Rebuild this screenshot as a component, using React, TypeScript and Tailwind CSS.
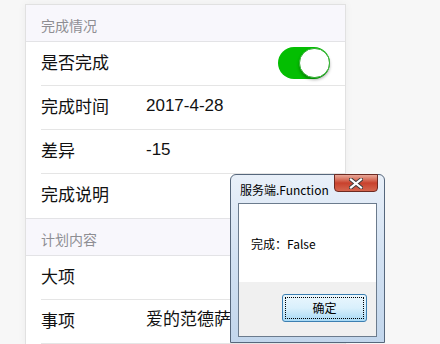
import React from "react";

const cn = '"Noto Sans CJK SC", "Liberation Sans", sans-serif';
const latinCn = '"Liberation Sans", "Noto Sans CJK SC", sans-serif';

type Row = { label: string; value?: string; toggle?: boolean };

const SectionHeader: React.FC<{ title: string }> = ({ title }) => (
  <div className="h-[37px] border-b border-[#e3e3e6] bg-[#f8f7fc] pl-[15px] pt-[10px] text-[14px] leading-[20px] text-[#8e8e93]">
    {title}
  </div>
);

const Toggle: React.FC = () => (
  <div className="relative mt-[3px] h-[32px] w-[52px] rounded-full bg-[#04be02]">
    <div className="absolute right-0 top-[1px] h-[30px] w-[31px] rounded-full border border-[#33b033] bg-white shadow-[0_2px_3px_rgba(0,0,0,0.3)]" />
  </div>
);

const ListRow: React.FC<{ row: Row; last?: boolean }> = ({ row, last }) => (
  <div className="pl-[15px]">
    <div
      className={
        "flex h-[44px] items-center pb-[4px] pr-[15px] text-[17px] text-[#111] " +
        (last ? "" : "border-b border-[#e5e5e5]")
      }
    >
      <div className="w-[105px] shrink-0">{row.label}</div>
      <div className="flex-1 whitespace-nowrap" style={{ fontFamily: latinCn }}>
        {row.value}
      </div>
      {row.toggle && <Toggle />}
    </div>
  </div>
);

const WinDialog: React.FC = () => (
  <div
    className="absolute left-[230px] top-[174px] h-[169px] w-[155px] rounded-t-[6px] border border-[#56677c] bg-gradient-to-b from-[#e9f0f9] via-[#d2e1f2] to-[#c2d6ec] px-[7px] pb-[6px]"
    style={{ fontFamily: cn }}
  >
    <div className="relative flex h-[28px] items-center pl-[2px] text-[12px] text-black">
      <span className="pt-[2px]">服务端.Function</span>
      <div className="absolute right-[-1px] top-[-1px] flex h-[18px] w-[44px] items-center justify-center rounded-b-[4px] border border-[#6d2a22] bg-gradient-to-b from-[#e8a899] via-[#c8412d] to-[#d4654e]">
        <svg width="14" height="11" viewBox="0 0 14 11">
          <path d="M2 1.5 L12 9.5 M12 1.5 L2 9.5" stroke="#3a3a3a" strokeWidth="4" strokeLinecap="square" />
          <path d="M2 1.5 L12 9.5 M12 1.5 L2 9.5" stroke="#fff" strokeWidth="2.2" strokeLinecap="square" />
        </svg>
      </div>
    </div>
    <div className="flex h-[134px] flex-col border border-[#6b7b8d]">
      <div className="flex h-[78px] items-center bg-white pl-[12px] pt-[2px] text-[12px] text-black">
        完成：False
      </div>
      <div className="flex flex-1 items-start justify-end bg-[#f0f0f0] pr-[9px] pt-[12px]">
        <div className="h-[28px] w-[85px] rounded-[3px] border border-[#3c7fb1] bg-gradient-to-b from-[#eaf6fd] via-[#d9f0fc] to-[#a7d9f5] p-[2px]">
          <div className="flex h-full w-full items-center justify-center border border-dotted border-black text-[12px] text-black">
            确定
          </div>
        </div>
      </div>
    </div>
  </div>
);

export default function App() {
  const section1: Row[] = [
    { label: "是否完成", toggle: true },
    { label: "完成时间", value: "2017-4-28" },
    { label: "差异", value: "-15" },
    { label: "完成说明" },
  ];
  const section2: Row[] = [
    { label: "大项" },
    { label: "事项", value: "爱的范德萨" },
  ];

  return (
    <div
      className="relative h-[344px] w-[440px] overflow-hidden bg-[#f7f7f7] pl-[25px] pt-[4px]"
      style={{ fontFamily: cn }}
    >
      <div className="w-[321px] border border-b-0 border-[#e1e1e1] bg-white shadow-[0_0_8px_rgba(0,0,0,0.05)]">
        <SectionHeader title="完成情况" />
        {section1.map((r, i) => (
          <ListRow key={r.label} row={r} last={i === section1.length - 1} />
        ))}
        <div className="border-t border-[#e3e3e6]">
          <SectionHeader title="计划内容" />
        </div>
        {section2.map((r) => (
          <ListRow key={r.label} row={r} />
        ))}
      </div>
      <WinDialog />
    </div>
  );
}
